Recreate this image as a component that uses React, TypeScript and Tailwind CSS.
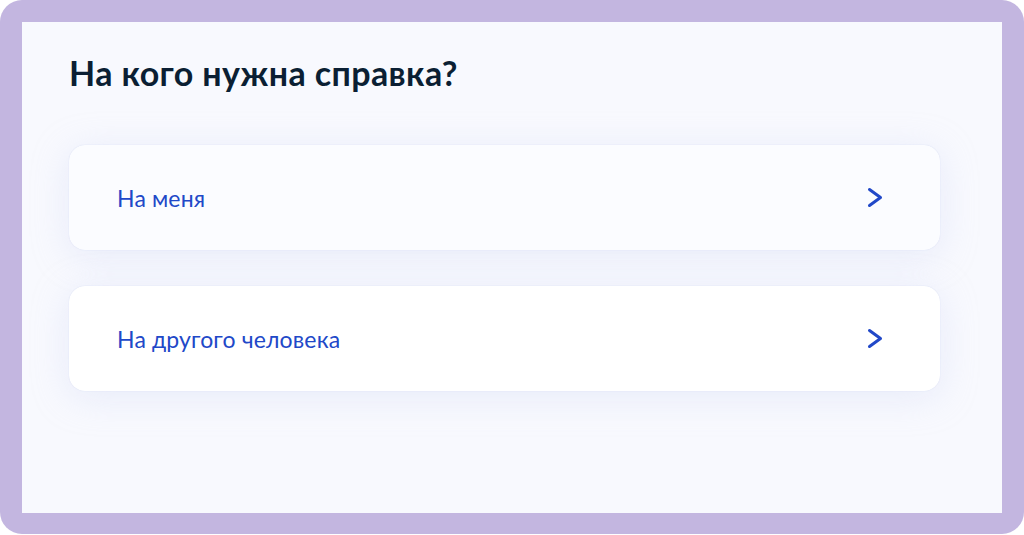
import React from "react";

function Chevron() {
  return (
    <svg width="20" height="24" viewBox="0 0 20 24" fill="none" className="shrink-0">
      <polyline
        points="4.5,3.5 15.5,11.5 4.5,19.5"
        stroke="#2148c8"
        strokeWidth="3"
        strokeLinecap="round"
        strokeLinejoin="round"
      />
    </svg>
  );
}

function Card({ label, tint }: { label: string; tint?: boolean }) {
  return (
    <div
      className={`flex h-[105px] w-[871px] items-center justify-between rounded-[16px] pl-[48px] pr-[55px] shadow-[0_0_1px_rgba(180,190,230,0.6),0_6px_36px_rgba(200,208,240,0.35)] ${
        tint ? "bg-[#fbfcff]" : "bg-white"
      }`}
    >
      <span className="text-[23px] leading-[28px] tracking-[0.15px] text-[#2148c8]">{label}</span>
      <Chevron />
    </div>
  );
}

export default function App() {
  return (
    <div className="h-[535px] w-[1024px] bg-white" style={{ fontFamily: "Lato, 'Noto Sans', sans-serif" }}>
      <div className="h-[534px] w-[1024px] rounded-[22px] bg-[#c3b6e0] p-[22px] pb-[21px]">
        <div className="flex h-full w-full flex-col bg-[#f8f9fe] pl-[47px] pt-[31px]">
          <h1 className="text-[34px] font-bold leading-[40px] tracking-[0.4px] text-[#0b1f33]">На кого нужна справка?</h1>
          <div className="mt-[52px] flex flex-col gap-[36px]">
            <Card label="На меня" tint />
            <Card label="На другого человека" />
          </div>
        </div>
      </div>
    </div>
  );
}
